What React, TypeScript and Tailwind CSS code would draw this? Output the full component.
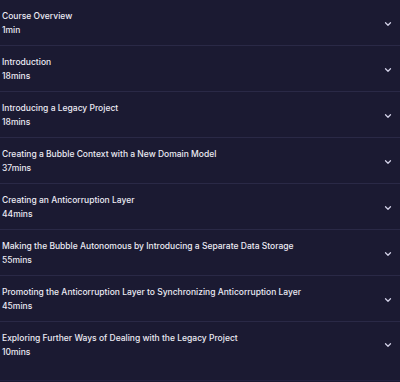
import { LuChevronDown } from "react-icons/lu";

const lessons = [
  { title: "Course Overview", duration: "1min" },
  { title: "Introduction", duration: "18mins" },
  { title: "Introducing a Legacy Project", duration: "18mins" },
  { title: "Creating a Bubble Context with a New Domain Model", duration: "37mins" },
  { title: "Creating an Anticorruption Layer", duration: "44mins" },
  {
    title: "Making the Bubble Autonomous by Introducing a Separate Data Storage",
    duration: "55mins",
  },
  {
    title: "Promoting the Anticorruption Layer to Synchronizing Anticorruption Layer",
    duration: "45mins",
  },
  { title: "Exploring Further Ways of Dealing with the Legacy Project", duration: "10mins" },
];

export default function App() {
  return (
    <div className="min-h-[382px] w-[400px] bg-[#1b1a32] font-['Inter',sans-serif] text-[#ecebf4]">
      {lessons.map((lesson, index) => {
        const last = index === lessons.length - 1;
        return (
          <div
            key={index}
            className={
              last
                ? "flex items-start justify-between border-b border-[#232240] pl-[2px] pr-[7px] pt-[9px] pb-[21px]"
                : "flex items-center justify-between border-b border-[#2a2946] pl-[2px] pr-[7px] pt-[9px] pb-[8px]"
            }
          >
            <div className="flex flex-col">
              <p className="text-[8.5px] leading-[14px] font-medium">{lesson.title}</p>
              <p className="text-[8.5px] leading-[14px] font-medium">{lesson.duration}</p>
            </div>
            <LuChevronDown
              className={
                last
                  ? "mt-[9px] h-[10px] w-[10px] text-[#d2d0e6]"
                  : "mt-[2px] h-[10px] w-[10px] text-[#d2d0e6]"
              }
              strokeWidth={3}
            />
          </div>
        );
      })}
    </div>
  );
}
